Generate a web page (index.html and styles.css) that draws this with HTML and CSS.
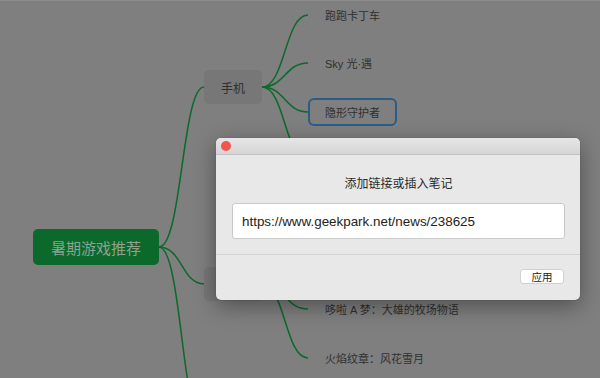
FILE: index.html
```html
<!DOCTYPE html>
<html lang="zh">
<head>
<meta charset="utf-8">
<title>暑期游戏推荐</title>
<link rel="stylesheet" href="styles.css">
</head>
<body>
<div class="stage">
  <svg class="links" width="600" height="378" viewBox="0 0 600 378">
    <g fill="none" stroke="#0b6a2b" stroke-width="1.5">
      <path d="M159 246 C182 246 182 86 204 86"/>
      <path d="M159 246 C182 246 182 283 204 283"/>
      <path d="M159 246 C182 246 182 430 205 430"/>
      <path d="M262 86 C285 86 285 14 308 14"/>
      <path d="M262 86 C285 86 285 62 308 62"/>
      <path d="M262 86 C285 86 285 111 308 111"/>
      <path d="M262 86 C285 86 285 160 308 160"/>
      <path d="M262 283 C285 283 285 259 308 259"/>
      <path d="M262 283 C285 283 285 308 308 308"/>
      <path d="M262 283 C285 283 285 357 308 357"/>
    </g>
  </svg>

  <div class="node root">暑期游戏推荐</div>
  <div class="node branch branch-a">手机</div>
  <div class="node branch branch-b">主机</div>

  <div class="leaf" style="top:0px">跑跑卡丁车</div>
  <div class="leaf" style="top:48px">Sky 光·遇</div>
  <div class="leaf selected" style="top:97px">隐形守护者</div>
  <div class="leaf" style="top:146px">王者荣耀</div>
  <div class="leaf" style="top:245px">塞尔达传说</div>
  <div class="leaf" style="top:294px">哆啦 A 梦：大雄的牧场物语</div>
  <div class="leaf" style="top:343px">火焰纹章：风花雪月</div>

  <div class="dialog">
    <div class="titlebar"><span class="close"></span></div>
    <div class="body">
      <div class="heading">添加链接或插入笔记</div>
      <div class="field">https://www.geekpark.net/news/238625</div>
    </div>
    <div class="footer">
      <button class="apply">应用</button>
    </div>
  </div>
</div>
</body>
</html>
```

FILE: styles.css
```css
html, body {
  margin: 0;
  padding: 0;
}
body {
  width: 600px;
  height: 378px;
  overflow: hidden;
  background: #7f7f7f;
  font-family: "Liberation Sans", "Noto Sans CJK SC", sans-serif;
}
.stage {
  position: relative;
  width: 600px;
  height: 378px;
  background: #7f7f7f;
  border-top: 1px solid #8a8a8a;
  box-sizing: border-box;
}
.links {
  position: absolute;
  left: 0;
  top: 0;
}
.node {
  position: absolute;
  box-sizing: border-box;
  display: flex;
  align-items: center;
  justify-content: center;
  border-radius: 5px;
  font-family: "Noto Sans CJK SC", sans-serif;
}
.root {
  left: 33px;
  top: 228px;
  width: 126px;
  height: 36px;
  background: #0b6a2b;
  color: #8fa28f;
  font-size: 15px;
}
.branch {
  left: 204px;
  width: 58px;
  height: 34px;
  background: #777777;
  color: #2f2f2f;
  font-size: 12px;
}
.branch-a { top: 69px; }
.branch-b { top: 266px; }
.leaf {
  position: absolute;
  left: 308px;
  height: 28px;
  box-sizing: border-box;
  display: flex;
  align-items: center;
  padding: 0 15px;
  border: 2px solid transparent;
  border-radius: 6px;
  color: #2f2f2f;
  font-size: 11px;
  white-space: nowrap;
  font-family: "Liberation Sans", "Noto Sans CJK SC", sans-serif;
}
.leaf.selected {
  border-color: #2a5d86;
}
.dialog {
  position: absolute;
  left: 216px;
  top: 137px;
  width: 364px;
  height: 162px;
  background: #e8e8e8;
  border-radius: 5px;
  overflow: hidden;
  display: flex;
  flex-direction: column;
  box-shadow: 0 6px 22px rgba(0, 0, 0, 0.38), 0 0 1px rgba(0, 0, 0, 0.4);
}
.titlebar {
  height: 16px;
  flex: none;
  background: linear-gradient(#e6e6e6, #d5d5d5);
  border-bottom: 1px solid #c2c2c2;
  display: flex;
  align-items: center;
  padding-left: 5px;
}
.close {
  width: 10px;
  height: 10px;
  border-radius: 50%;
  background: #f25550;
}
.body {
  flex: none;
  display: flex;
  flex-direction: column;
  align-items: center;
  padding: 20px 15px 15px 16px;
  border-bottom: 1px solid #d3d3d3;
}
.heading {
  font-family: "Noto Sans CJK SC", sans-serif;
  font-size: 12px;
  line-height: 16px;
  color: #2a2a2a;
}
.field {
  margin-top: 12px;
  align-self: stretch;
  height: 36px;
  box-sizing: border-box;
  background: #ffffff;
  border: 1px solid #c9c9c9;
  border-radius: 3px;
  display: flex;
  align-items: center;
  padding-left: 9px;
  font-size: 13.4px;
  color: #222222;
}
.footer {
  flex: 1;
  display: flex;
  justify-content: flex-end;
  align-items: flex-start;
  padding: 14px 16px 0 0;
}
.apply {
  width: 44px;
  height: 15px;
  padding: 0;
  box-sizing: border-box;
  background: #ffffff;
  border: 1px solid #d0d0d0;
  border-radius: 3px;
  font-family: "Noto Sans CJK SC", sans-serif;
  font-size: 10.5px;
  line-height: 13px;
  color: #222222;
}
```
